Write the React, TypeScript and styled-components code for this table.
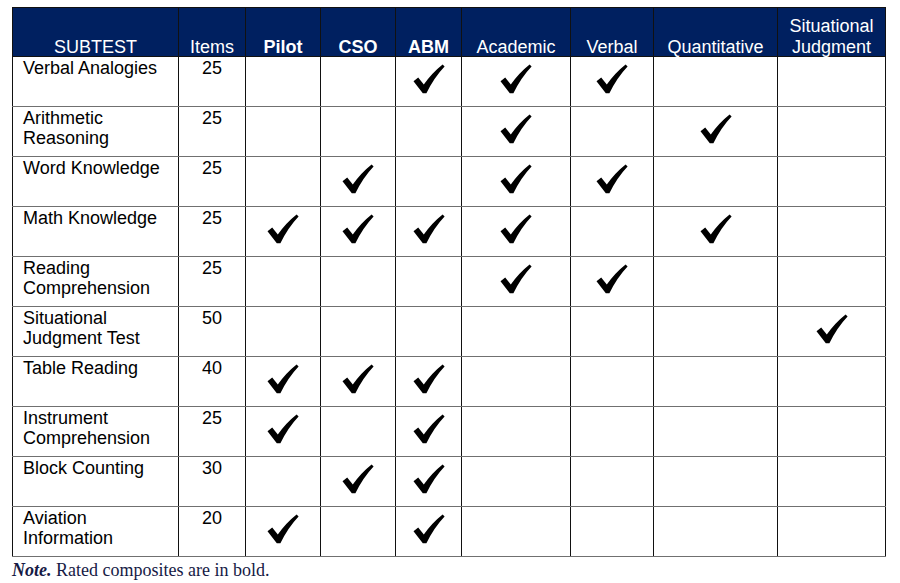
import React from "react";
import styled, { createGlobalStyle } from "styled-components";

const GlobalStyle = createGlobalStyle`
  body {
    margin: 0;
    background: #fff;
  }
`;

type Col = "pilot" | "cso" | "abm" | "academic" | "verbal" | "quant" | "sj";

interface Subtest {
  name: string[];
  items: number;
  checks: Col[];
}

const composites: { key: Col; label: string[]; bold?: boolean }[] = [
  { key: "pilot", label: ["Pilot"], bold: true },
  { key: "cso", label: ["CSO"], bold: true },
  { key: "abm", label: ["ABM"], bold: true },
  { key: "academic", label: ["Academic"] },
  { key: "verbal", label: ["Verbal"] },
  { key: "quant", label: ["Quantitative"] },
  { key: "sj", label: ["Situational", "Judgment"] },
];

const subtests: Subtest[] = [
  { name: ["Verbal Analogies"], items: 25, checks: ["abm", "academic", "verbal"] },
  { name: ["Arithmetic", "Reasoning"], items: 25, checks: ["academic", "quant"] },
  { name: ["Word Knowledge"], items: 25, checks: ["cso", "academic", "verbal"] },
  {
    name: ["Math Knowledge"],
    items: 25,
    checks: ["pilot", "cso", "abm", "academic", "quant"],
  },
  { name: ["Reading", "Comprehension"], items: 25, checks: ["academic", "verbal"] },
  { name: ["Situational", "Judgment Test"], items: 50, checks: ["sj"] },
  { name: ["Table Reading"], items: 40, checks: ["pilot", "cso", "abm"] },
  { name: ["Instrument", "Comprehension"], items: 25, checks: ["pilot", "abm"] },
  { name: ["Block Counting"], items: 30, checks: ["cso", "abm"] },
  { name: ["Aviation", "Information"], items: 20, checks: ["pilot", "abm"] },
];

const colWidths = [166, 67, 75, 75, 66, 109, 83, 124, 108];

const Check = () => (
  <CheckSvg viewBox="0 0 32 30" aria-hidden="true">
    <path d="M0.5 17.2 L5.2 13.4 L10.8 20.6 Q19 9 29.6 0.6 L31.6 2.4 Q21 13.5 13.4 29.2 L9.8 29.2 Z" />
  </CheckSvg>
);

const App: React.FC = () => (
  <Page>
    <GlobalStyle />
    <Table>
      <colgroup>
        {colWidths.map((w, i) => (
          <col key={i} style={{ width: w }} />
        ))}
      </colgroup>
      <thead>
        <tr>
          <HeadCell>
            <HeadLabel>SUBTEST</HeadLabel>
          </HeadCell>
          <HeadCell>
            <HeadLabel>Items</HeadLabel>
          </HeadCell>
          {composites.map((c) => (
            <HeadCell key={c.key} $bold={c.bold}>
              <HeadLabel>
                {c.label.map((l, i) => (
                  <Line key={i}>{l}</Line>
                ))}
              </HeadLabel>
            </HeadCell>
          ))}
        </tr>
      </thead>
      <tbody>
        {subtests.map((s) => (
          <Row key={s.name.join(" ")}>
            <NameCell>
              {s.name.map((l, i) => (
                <Line key={i}>{l}</Line>
              ))}
            </NameCell>
            <ItemsCell>{s.items}</ItemsCell>
            {composites.map((c) => (
              <CheckCell key={c.key}>
                {s.checks.includes(c.key) && <Check />}
              </CheckCell>
            ))}
          </Row>
        ))}
      </tbody>
    </Table>
    <Note>
      <NoteLabel>Note.</NoteLabel> Rated composites are in bold.
    </Note>
  </Page>
);

const Page = styled.div`
  padding: 7px 0 0 12px;
`;

const Table = styled.table`
  border-collapse: collapse;
  table-layout: fixed;
  width: 874px;
  border: 1px solid #111;
  font-family: "Liberation Sans", Arial, sans-serif;
  font-size: 18px;
  line-height: 20px;
  color: #000;
`;

const HeadCell = styled.th<{ $bold?: boolean }>`
  background: #002060;
  color: #fff;
  font-weight: ${(p) => (p.$bold ? 700 : 400)};
  height: 49px;
  padding: 0;
  line-height: 21px;
  vertical-align: bottom;
  text-align: center;
  border-left: 1px solid #111;
  border-right: 1px solid #111;
  border-bottom: 1px solid #111;
  box-sizing: border-box;
`;

const HeadLabel = styled.div`
  margin-bottom: -2px;
`;

const Line = styled.div`
  white-space: nowrap;
`;

const Row = styled.tr`
  height: 50px;
  border-bottom: 1px solid #707070;
`;

const Cell = styled.td`
  border-left: 1px solid #111;
  border-right: 1px solid #111;
  border-bottom: 1px solid #707070;
  padding: 0;
  box-sizing: border-box;
`;

const NameCell = styled(Cell)`
  vertical-align: top;
  padding: 1px 0 0 10px;
`;

const ItemsCell = styled(Cell)`
  vertical-align: top;
  text-align: center;
  padding-top: 1px;
`;

const CheckCell = styled(Cell)`
  text-align: center;
  vertical-align: top;
  padding-top: 7px;
`;

const CheckSvg = styled.svg`
  width: 32px;
  height: 30px;
  display: inline-block;
  fill: #000;
`;

const Note = styled.div`
  margin-top: 3px;
  font-family: "Liberation Serif", "Times New Roman", serif;
  font-size: 18px;
  color: #161a45;
`;

const NoteLabel = styled.span`
  font-style: italic;
  font-weight: 700;
`;

export default App;
